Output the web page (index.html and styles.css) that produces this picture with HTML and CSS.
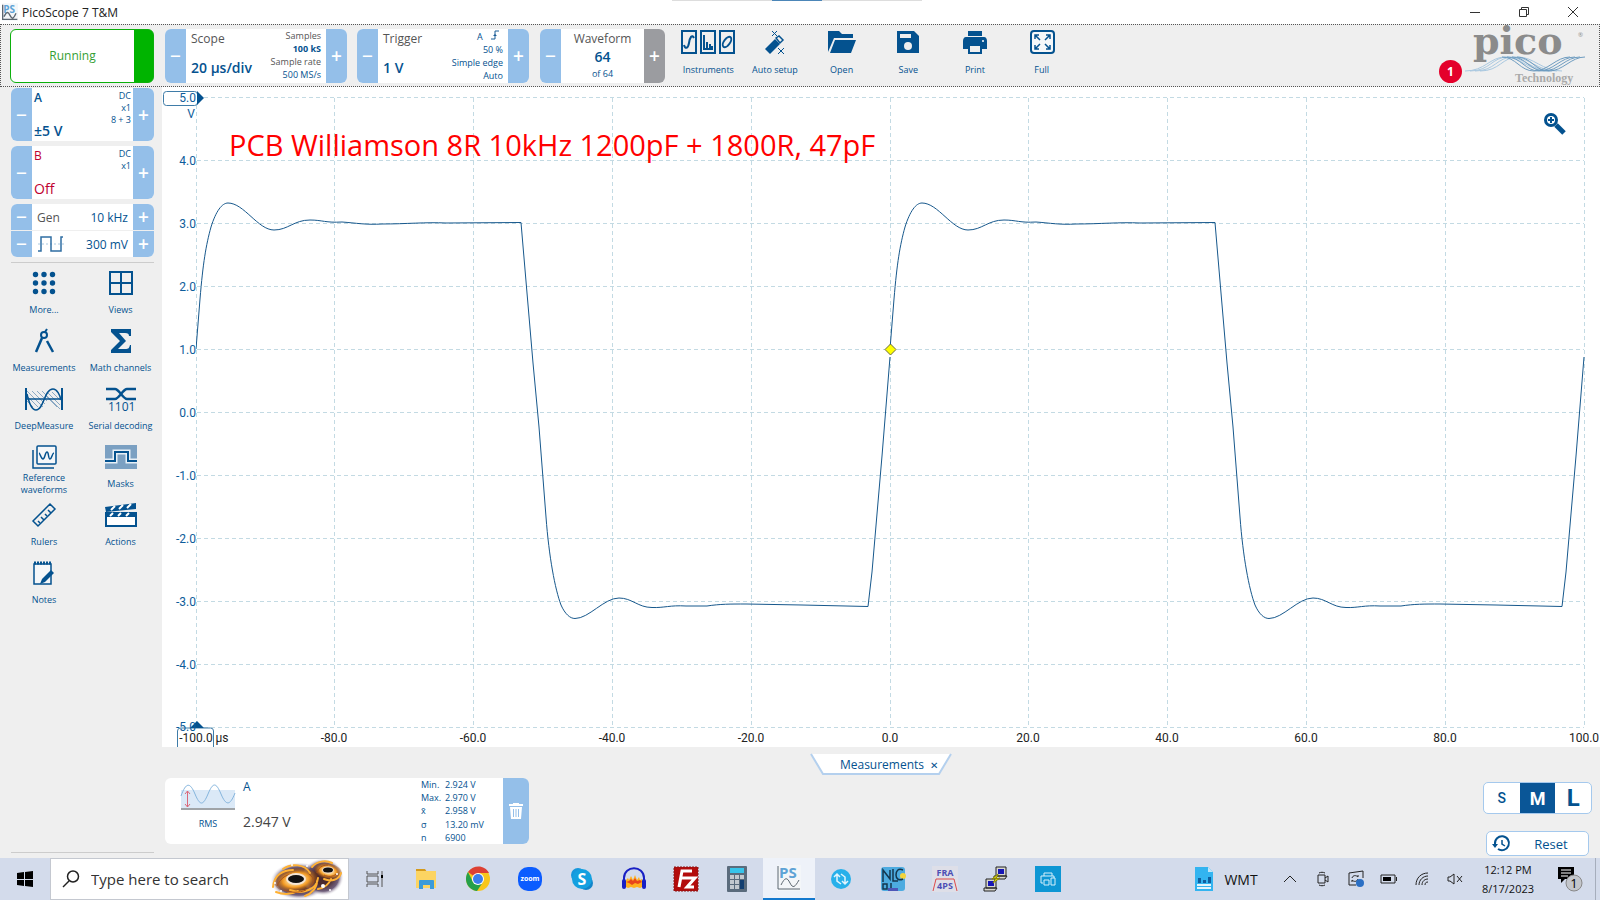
FILE: index.html
```
<!DOCTYPE html>
<html lang="en">
<head>
    <meta charset="UTF-8">
    <meta name="viewport" content="width=device-width, initial-scale=1.0">
    <title>PicoScope 7 T&amp;M</title>
    <link rel="stylesheet" href="styles.css">
</head>
<body>
    <header class="titlebar">
        <svg class="app-icon" width="16" height="18" viewBox="0 0 24 26"><rect width="24" height="26" fill="#f3f6f9"/><text x="2" y="14" class="ps-letters">PS</text><path d="M1 2v22h22M3 20c4-8 6-8 9-2s5 6 9-3" fill="none" stroke="#5b6670" stroke-width="2"/></svg>
        <span class="app-name">PicoScope 7 T&amp;M</span>
        <div class="snap-bar"></div>
        <div class="window-buttons">
            <button aria-label="Minimize"><svg width="12" height="12" viewBox="0 0 12 12"><path d="M1 6.500h10"/></svg></button>
            <button aria-label="Restore"><svg width="12" height="12" viewBox="0 0 12 12"><path d="M1.500 3.500h7v7h-7zM3.500 3.500v-2h7v7h-2"/></svg></button>
            <button aria-label="Close"><svg width="12" height="12" viewBox="0 0 12 12"><path d="M1 1l10 10M11 1L1 11"/></svg></button>
        </div>
    </header>

    <div class="toolbar">
        <button class="run-btn"><span>Running</span></button>

        <section class="control scope">
            <button class="step" aria-label="Decrease timebase">&minus;</button>
            <div class="control-body">
                <div class="control-main"><span class="name">Scope</span><strong class="value">20 µs/div</strong></div>
                <div class="control-info"><span class="grey">Samples</span><b>100 kS</b><span class="grey">Sample rate</span><span>500 MS/s</span></div>
            </div>
            <button class="step" aria-label="Increase timebase">+</button>
        </section>

        <section class="control trigger">
            <button class="step" aria-label="Decrease trigger level">&minus;</button>
            <div class="control-body">
                <div class="control-main"><span class="name">Trigger</span><strong class="value">1 V</strong></div>
                <div class="control-info"><span>A <svg class="edge" width="8" height="10" viewBox="0 0 8 10"><path d="M0 9h4V1h4" fill="none" stroke="#1a5c96"/><path d="M2 6l2-2 2 2z" fill="#1a5c96"/></svg></span><span>50 %</span><span>Simple edge</span><span>Auto</span></div>
            </div>
            <button class="step" aria-label="Increase trigger level">+</button>
        </section>

        <section class="control waveform">
            <button class="step" aria-label="Previous waveform">&minus;</button>
            <div class="control-body centered"><span class="name">Waveform</span><strong class="value">64</strong><span class="small">of 64</span></div>
            <button class="step disabled" aria-label="Next waveform">+</button>
        </section>

        <nav class="tool-buttons">
            <button><svg width="56" height="24" viewBox="0 0 56 24"><g fill="none" stroke="#04528f" stroke-width="2"><path d="M2 1h14v22H2zM21 1h14v22H21zM40 1h14v22H40z"/><path d="M4 15c1 4 4 4 5-2s3-9 5-5M24 5v14h9M27 19v-7M30 19v-5M32 19v-3"/><ellipse cx="47" cy="12" rx="3" ry="6" transform="rotate(35 47 12)"/></g></svg>Instruments</button>
            <button><svg width="24" height="24" viewBox="0 0 24 24"><path d="M2 19L12 9l5 5L7 24z" fill="#04528f"/><path d="M13 8l3-2 4 4-3 3z" fill="none" stroke="#04528f" stroke-width="1.500"/><path d="M9 1l5 5M14 1L9 6M15 18l6 6M21 18l-6 6" stroke="#04528f"/></svg>Auto setup</button>
            <button><svg width="28" height="24" viewBox="0 0 28 24"><path d="M0 22V1h11l3 3h11v4H6L0 22zM7 10h21l-5 13H2z" fill="#04528f"/></svg>Open</button>
            <button><svg width="24" height="24" viewBox="0 0 24 24"><path d="M1 1h17l5 5v17H1z" fill="#04528f"/><path d="M4 4h11v4H4z" fill="#efefef"/><circle cx="12" cy="16" r="4" fill="#efefef"/></svg>Save</button>
            <button><svg width="26" height="24" viewBox="0 0 26 24"><path d="M6 1h14v5H6zM4 7h18c2 0 3 2 3 4v8h-5v-4H6v4H1v-8c0-2 1-4 3-4z" fill="#04528f"/><path d="M7 15h12v8H7z" fill="#efefef" stroke="#04528f" stroke-width="2"/><circle cx="21" cy="11" r="1" fill="#fff"/></svg>Print</button>
            <button><svg width="26" height="24" viewBox="0 0 26 24"><rect x="2" y="1" width="23" height="22" rx="3" fill="#f5f7f9" stroke="#04528f" stroke-width="2"/><path d="M11 10L6 5M6 9V5h4M16 10l5-5M21 9V5h-4M11 14l-5 5M6 15v4h4M16 14l5 5M21 15v4h-4" fill="none" stroke="#04528f" stroke-width="1.500"/></svg>Full</button>
        </nav>

        <div class="brand">
            <span class="alert-count">1</span>
            <svg width="124" height="58" viewBox="0 0 124 58">
                <text x="8" y="27" class="logo-name">pico</text>
                <text x="113" y="10" class="logo-reg">®</text>
                <g fill="none" stroke-width="1">
                    <path d="M0 44c20 0 25-14 40-14s24 14 44 14M5 44c20 0 22-14 38-14s24 14 44 14M10 44c20 0 22-14 38-14s24 14 44 14M15 44c20 0 22-14 38-14s24 14 44 14" stroke="#a9c8e0"/>
                    <path d="M37 30c14 0 18 14 32 14s22-14 36-14M42 30c14 0 18 14 32 14s22-14 36-14M47 30c14 0 18 14 32 14s22-14 36-14M52 30c14 0 18 14 32 14s22-14 36-14" stroke="#6e9cc0"/>
                </g>
                <text x="50" y="55" class="logo-sub">Technology</text>
            </svg>
        </div>
    </div>

    <main class="workspace">
        <aside class="sidebar">
            <section class="control channel">
                <button class="step" aria-label="Decrease range of A">&minus;</button>
                <div class="control-body">
                    <div class="control-main"><span class="letter">A</span><span class="range">±5 V</span></div>
                    <div class="control-info"><span>DC</span><span>x1</span><span>8 + 3</span></div>
                </div>
                <button class="step" aria-label="Increase range of A">+</button>
            </section>
            <section class="control channel channel-b">
                <button class="step" aria-label="Decrease range of B">&minus;</button>
                <div class="control-body">
                    <div class="control-main"><span class="letter">B</span><span class="range">Off</span></div>
                    <div class="control-info"><span>DC</span><span>x1</span></div>
                </div>
                <button class="step" aria-label="Increase range of B">+</button>
            </section>
            <section class="generator">
                <div class="gen-row"><button class="step" aria-label="Decrease frequency">&minus;</button><div><span class="grey">Gen</span><span>10 kHz</span></div><button class="step" aria-label="Increase frequency">+</button></div>
                <div class="gen-row"><button class="step" aria-label="Decrease amplitude">&minus;</button><div><svg width="28" height="18" viewBox="0 0 28 18"><path d="M1 9h26" stroke="#a9c8e0" stroke-dasharray="2 2"/><path d="M1 16h3V2h10v14h10V2h2" fill="none" stroke="#2f6ea3" stroke-width="1.500"/></svg><span>300 mV</span></div><button class="step" aria-label="Increase amplitude">+</button></div>
            </section>

            <nav class="tool-grid">
                <button><svg width="24" height="24" viewBox="0 0 24 24" fill="#04528f"><circle cx="3.500" cy="3.500" r="2.700"/><circle cx="12" cy="3.500" r="2.700"/><circle cx="20.500" cy="3.500" r="2.700"/><circle cx="3.500" cy="12" r="2.700"/><circle cx="12" cy="12" r="2.700"/><circle cx="20.500" cy="12" r="2.700"/><circle cx="3.500" cy="20.500" r="2.700"/><circle cx="12" cy="20.500" r="2.700"/><circle cx="20.500" cy="20.500" r="2.700"/></svg><span>More...</span></button>
                <button><svg width="24" height="24" viewBox="0 0 24 24"><path d="M1 1h22v22H1zM12 1v22M1 12h22" fill="none" stroke="#04528f" stroke-width="2"/></svg><span>Views</span></button>
                <button><svg width="24" height="24" viewBox="0 0 24 24"><g fill="none" stroke="#04528f" stroke-width="2"><circle cx="12" cy="6" r="3"/><path d="M13 3l2-3" /><path d="M10 9L4 23M15 12l6 11" stroke-width="2.500"/></g></svg><span>Measurements</span></button>
                <button><svg width="24" height="24" viewBox="0 0 24 24"><path d="M2 0h20v7h-2c0-2-1-3-4-3h-6l7 8-8 8h7c4 0 4-1 5-4h1v8H2v-3l9-9-9-9z" fill="#04528f"/></svg><span>Math channels</span></button>
                <button><svg width="38" height="24" viewBox="0 0 38 24"><path d="M2 4l16 16M7 4l13 13M12 4l10 10M2 9l11 11M2 14l6 6M20 8l12 12M23 6l12 12M17 4l18 18M27 5l8 8" stroke="#8ba9c4"/><g fill="none" stroke="#04528f"><path d="M1 1v22M37 1v22" stroke-width="2"/><path d="M1 12h36M2 7C4 16 7 23 11 23C19 23 19 2 28 2C32 2 35 8 36 13" stroke-width="1.500"/></g></svg><span>DeepMeasure</span></button>
                <button><svg width="32" height="24" viewBox="0 0 32 24"><path d="M1 2h9c4 0 8 10 12 10h9M1 12h9c4 0 8-10 12-10h9" fill="none" stroke="#04528f" stroke-width="2.500"/><text x="3" y="24" class="bits">1101</text></svg><span>Serial decoding</span></button>
                <button><svg width="26" height="24" viewBox="0 0 26 24"><g fill="none" stroke="#04528f" stroke-width="1.500"><rect x="6" y="1" width="19" height="18" rx="1" fill="#f5f7f9"/><path d="M2 5v18h21"/><path d="M8 8c1 0 2 6 4 6s2-7 4-7 1 7 3 7 2-6 4-6"/></g></svg><span>Reference waveforms</span></button>
                <button><svg width="32" height="24" viewBox="0 0 32 24"><path d="M0 0h32v24H0z" fill="#7ba0c2"/><path d="M0 16h10V7h13v9h9" fill="none" stroke="#e8f0f7" stroke-width="5"/><path d="M0 16h10V7h13v9h9" fill="none" stroke="#04528f" stroke-width="2"/></svg><span>Masks</span></button>
                <button><svg width="24" height="24" viewBox="0 0 24 24"><g fill="none" stroke="#04528f" stroke-width="1.500"><path d="M1 18L18 1l5 5L6 23z"/><path d="M8 20l-2-2M12 17l-3-3M15 13l-2-2M19 10l-3-3"/></g></svg><span>Rulers</span></button>
                <button><svg width="32" height="24" viewBox="0 0 32 24"><path d="M1 13h30v10H1z" fill="#fff" stroke="#04528f" stroke-width="2"/><path d="M0 4L31 0v6L1 9zM0 9h32v5H0z" fill="#04528f"/><path d="M6 7l4-4M14 6l4-4M22 5l4-4M5 13l3-3M13 13l3-3M21 13l3-3" stroke="#fff" stroke-width="2"/></svg><span>Actions</span></button>
                <button><svg width="24" height="24" viewBox="0 0 24 24"><path d="M2 3h17v20H2z" fill="#f5f7f9" stroke="#04528f" stroke-width="1.500"/><path d="M2 2h18" stroke="#04528f" stroke-width="3" stroke-dasharray="2 1"/><path d="M8 23l2-5 9-9 3 3-9 9z" fill="#04528f"/></svg><span>Notes</span></button>
            </nav>
        </aside>

        <section class="view">
            <svg class="plot" viewBox="0 0 1438 660">
                <path class="grid" d="M35 10.500H1422M35 73.500H1422M35 136.500H1422M35 199.500H1422M35 262.500H1422M35 325.500H1422M35 388.500H1422M35 451.500H1422M35 514.500H1422M35 577.500H1422M35 640.500H1422"/>
                <path class="grid" d="M34.500 11V640M172.500 11V640M311.500 11V640M450.500 11V640M589.500 11V640M728.500 11V640M866.500 11V640M1005.500 11V640M1144.500 11V640M1283.500 11V640M1422.500 11V640"/>

                <!-- top and bottom axis handles -->
                <g class="handle">
                    <rect x="1.500" y="4.500" width="34" height="14" rx="3"/>
                    <path d="M35 4l7 7-7 7z" class="arrow"/>
                    <path d="M15.500 660V644q0-3 3-3h30q3 0 3 3v16"/>
                    <path d="M28 641l7-7 7 7z" class="arrow"/>
                </g>

                <g class="y-labels">
                    <text x="34" y="15">5.0</text>
                    <text x="33" y="31">V</text>
                    <text x="34" y="78">4.0</text>
                    <text x="34" y="141">3.0</text>
                    <text x="34" y="204">2.0</text>
                    <text x="34" y="267">1.0</text>
                    <text x="34" y="330">0.0</text>
                    <text x="34" y="393">-1.0</text>
                    <text x="34" y="456">-2.0</text>
                    <text x="34" y="519">-3.0</text>
                    <text x="34" y="582">-4.0</text>
                    <text x="34" y="644">-5.0</text>
                </g>
                <g class="x-labels">
                    <text x="34" y="655">-100.0</text>
                    <text x="60" y="655">µs</text>
                    <text x="172" y="655">-80.0</text>
                    <text x="311" y="655">-60.0</text>
                    <text x="450" y="655">-40.0</text>
                    <text x="589" y="655">-20.0</text>
                    <text x="728" y="655">0.0</text>
                    <text x="866" y="655">20.0</text>
                    <text x="1005" y="655">40.0</text>
                    <text x="1144" y="655">60.0</text>
                    <text x="1283" y="655">80.0</text>
                    <text x="1422" y="655">100.0</text>
                </g>

                <!-- one 100 µs period, starting at the trigger point -->
                <defs>
                    <path id="period" d="M0 262L4 212C7 176 10 158 15 140C20 124 26 116 32 116C48 116 62 143 78 143C92 143 98 133 114 133C126 133 130 136 146 135C160 136 170 138 186 137C210 137 230 135 250 136L325 135.500L331 206L337 276L343 340L350 430C353 470 359 502 365 518C369 527 374 531.500 379 531.500C393 531.500 408 511 423 511C436 511 442 520.500 456 520.500C468 521 474 518 490 519L511 519C524 517 534 517 550 517L606 518L672 519.500L676 485L686 369L694 270"/>
                    <clipPath id="area"><path d="M34 0H1423V660H34z"/></clipPath>
                </defs>
                <g class="trace" clip-path="url(#area)">
                    <use href="#period" x="34"/>
                    <use href="#period" x="728"/>
                </g>
                <path d="M728.500 257l5.500 5.500-5.500 5.500-5.500-5.500z" fill="#ff0" stroke="#6b6b3a"/>
                <text x="67" y="69" class="annotation">PCB Williamson 8R 10kHz 1200pF + 1800R, 47pF</text>

                <g fill="none" stroke="#04528f">
                    <circle cx="1389" cy="33" r="5.500" stroke-width="3"/>
                    <path d="M1386 33h6M1389 30v6" stroke-width="2"/>
                    <path d="M1394 38l8 8" stroke-width="5"/>
                </g>
            </svg>

            <div class="panel">
                <div class="tab">
                    <svg width="140" height="22" viewBox="0 0 140 22"><path d="M0 0l12 20h116L140 0" fill="#fff" stroke="#b4d0ee" stroke-width="2"/></svg>
                    <span>Measurements</span><button aria-label="Close measurements">✕</button>
                </div>
                <div class="panel-row">
                    <article class="measure">
                        <div class="measure-type">
                            <svg width="54" height="26" viewBox="0 0 54 26"><path d="M0 5h54v18H0z" fill="#dbe9f7"/><path d="M0 11C5-3 9-3 14 9S22 21 27 9S35-3 40 9S49 21 54 8" fill="none" stroke="#84b4dc"/><path d="M0 24h54" stroke="#a0a4a8" stroke-width="2"/><path d="M6.500 6v16M4 9l2.500-3L9 9M4 19l2.500 3L9 19" fill="none" stroke="#d9687a"/></svg>
                            RMS
                        </div>
                        <div class="measure-value"><span class="channel-name">A</span><span class="reading">2.947 V</span></div>
                        <table class="stats">
                            <tr><th>Min.</th><td>2.924 V</td></tr>
                            <tr><th>Max.</th><td>2.970 V</td></tr>
                            <tr><th>x̄</th><td>2.958 V</td></tr>
                            <tr><th>σ</th><td>13.20 mV</td></tr>
                            <tr><th>n</th><td>6900</td></tr>
                        </table>
                        <button class="delete" aria-label="Delete measurement"><svg width="14" height="18" viewBox="0 0 14 18"><path d="M4 2V1h6v1h4v2H0V2zM1 5h12l-1 12H2z" fill="#fff"/><path d="M4.500 7v8M7 7v8M9.500 7v8" stroke="#94bfe9"/></svg></button>
                    </article>
                    <div class="panel-side">
                        <div class="sizes"><button class="s">S</button><button class="m" aria-pressed="true">M</button><button class="l">L</button></div>
                        <button class="reset"><svg width="18" height="16" viewBox="0 0 18 16"><g fill="none" stroke="#04528f" stroke-width="2"><path d="M3 8a7 7 0 1 1 3 5"/><path d="M10 4v4l3 2" stroke-width="1.500"/></g><path d="M0 8h6l-3 4z" fill="#04528f"/></svg><span>Reset</span></button>
                    </div>
                </div>
            </div>
        </section>
    </main>

    <footer class="taskbar">
        <button class="start" aria-label="Start"><svg width="18" height="18" viewBox="0 0 18 18"><path d="M1 3l7-1v7H1zM9 2l8-1v8H9zM1 10h7v6l-7-1zM9 10h8v7l-8-1z"/></svg></button>
        <label class="search">
            <svg width="18" height="18" viewBox="0 0 18 18"><circle cx="11" cy="6.500" r="5.500" fill="none" stroke="#222" stroke-width="1.500"/><path d="M7 11l-6 6" stroke="#222" stroke-width="1.500"/></svg>
            <input type="text" placeholder="Type here to search" aria-label="Search">
            <svg width="74" height="40" viewBox="0 0 74 40">
                <defs>
                    <radialGradient id="glow"><stop offset="0.400" stop-color="#4a2a2e"/><stop offset="0.750" stop-color="#5f4c6c" stop-opacity="0.900"/><stop offset="1" stop-color="#fff" stop-opacity="0"/></radialGradient>
                    <radialGradient id="disk"><stop offset="0.300" stop-color="#ffe0a0"/><stop offset="0.600" stop-color="#f29a24"/><stop offset="1" stop-color="#8a4210" stop-opacity="0.300"/></radialGradient>
                </defs>
                <ellipse cx="29" cy="22" rx="29" ry="19" fill="url(#glow)"/><ellipse cx="53" cy="18" rx="21" ry="19" fill="url(#glow)"/>
                <ellipse cx="26" cy="21" rx="22" ry="12" fill="url(#disk)" transform="rotate(-8 26 21)"/>
                <ellipse cx="58" cy="12" rx="14" ry="8" fill="url(#disk)" transform="rotate(12 58 12)"/>
                <g fill="none" stroke="#ffb133" stroke-width="2" stroke-linecap="round"><path d="M3 28c1-12 10-17 20-17M13 10c8-6 22-5 27 4M48 19c-1 11-15 17-28 12M35 37c6-2 12-8 12-15M6 33c8 3 16 2 22-1M42 8c5-6 14-7 20-4M71 14c-2 7-10 9-17 6M48 30c6-1 11-5 13-10"/></g>
                <g fill="none" stroke="#a8521a" stroke-width="1"><path d="M7 27c3-7 8-11 15-12M39 15c6 4 6 10-1 14M14 31c7 3 15 3 22 0M47 14c1-5 5-8 11-8M66 15c-3 3-8 3-12 1"/></g>
                <ellipse cx="26" cy="20" rx="10" ry="6" fill="#f4e6d6"/><ellipse cx="26" cy="20" rx="8" ry="4" fill="#111"/>
                <ellipse cx="58" cy="11" rx="6" ry="3.500" fill="#e9d4c2"/><ellipse cx="58" cy="11" rx="5" ry="2.500" fill="#111"/>
                <g fill="#fff"><circle cx="22" cy="6" r="1"/><circle cx="53" cy="27" r="2"/><circle cx="37" cy="7" r="1"/><circle cx="67" cy="15" r="1"/><circle cx="11" cy="32" r="1"/><circle cx="60" cy="31" r="1"/><circle cx="5" cy="24" r="1"/></g>
            </svg>
        </label>
        <nav class="apps">
            <button aria-label="Task view"><svg width="18" height="18" viewBox="0 0 18 18"><path d="M1 1v3h11V1M1 17v-3h11v3M1 6h11v6H1zM16 1v16" fill="none" stroke="#555"/><path d="M15 5h2v3h-2z"/></svg></button>
            <button aria-label="File Explorer"><svg width="24" height="24" viewBox="0 0 24 24"><path d="M1 2h9l2 3H1z" fill="#d59a1b"/><path d="M1 4h20v17H1z" fill="#fcd462"/><path d="M4 22v-8q0-1 1-1h13q1 0 1 1v8h-4v-4H8v4z" fill="#3c9bd9"/></svg></button>
            <button aria-label="Chrome"><svg width="26" height="26" viewBox="0 0 26 26"><circle cx="13" cy="13" r="12" fill="#f8c61c"/><path d="M13 13L3 6C9-2 20-1 24 7H13z" fill="#dd4034"/><path d="M3 6C-2 14 3 24 12 25l6-9-5 2-5-2z" fill="#25a04b"/><circle cx="13" cy="13" r="6" fill="#fff"/><circle cx="13" cy="13" r="5" fill="#3b7ded"/></svg></button>
            <button aria-label="Zoom"><svg width="26" height="26" viewBox="0 0 26 26"><rect x="1" y="1" width="24" height="24" rx="10" fill="#0b5cff"/><text x="13" y="15" class="zoom-text">zoom</text></svg></button>
            <button aria-label="Skype"><svg width="24" height="24" viewBox="0 0 24 24"><circle cx="8" cy="8" r="7" fill="#1597dc"/><circle cx="16" cy="16" r="7" fill="#1284c9"/><circle cx="12" cy="12" r="10" fill="#14a0e0"/><text x="12" y="18" class="skype-text">S</text></svg></button>
            <button aria-label="Audacity"><svg width="26" height="24" viewBox="0 0 26 24"><path d="M5 13l2-2 1 2 2-4 2 4 2-5 2 5 2-3 1 3 2-1v8l-2 1-3-1-3 1-3-1-3 1-2-1z" fill="#ffb01f"/><path d="M5 15l3-1 2-2 2 2 2-3 2 3 3-1 2 2-4 2-3-1-3 2-3-2z" fill="#e8451b"/><path d="M3 15V11C3-2 23-2 23 11v4" fill="none" stroke="#1820c4" stroke-width="2"/><rect x="1" y="12" width="4" height="10" rx="2" fill="#1820c4"/><rect x="21" y="12" width="4" height="10" rx="2" fill="#1820c4"/></svg></button>
            <button aria-label="FileZilla"><svg width="26" height="26" viewBox="0 0 26 26"><path d="M1 1h24v24H1z" fill="#b30b0b" stroke="#8b1616" stroke-dasharray="2 1"/><path d="M6 21L9 5h10M7 12h7M14 12h8l-8 9h7" fill="none" stroke="#fff" stroke-width="3"/></svg></button>
            <button aria-label="Calculator"><svg width="20" height="26" viewBox="0 0 20 26"><rect width="20" height="26" rx="1" fill="#5a6b7c"/><path d="M3 2h14v5H3z" fill="#37c4ea"/><path d="M3 9h4v4H3zM8 9h4v4H8zM13 9h4v4h-4zM3 14h4v4H3zM8 14h4v4H8zM3 19h4v4H3zM8 19h4v4H8z" fill="#c3c9cf"/><path d="M13 14h4v9h-4z" fill="#123e70"/></svg></button>
            <button class="active" aria-label="PicoScope"><svg width="24" height="26" viewBox="0 0 24 26"><rect width="24" height="26" fill="#f3f6f9"/><text x="2" y="13" class="ps-letters">PS</text><path d="M1 1v23h22M4 20c4-8 6-8 9-2s5 4 9-3" fill="none" stroke="#5b6670"/></svg></button>
            <button aria-label="Sync"><svg width="22" height="24" viewBox="0 0 22 24"><circle cx="11" cy="12" r="10" fill="#27b0ea"/><path d="M4 10l3-3 3 3M7 8v6l4 3M18 14l-3 3-3-3M15 16v-6l-4-3" fill="none" stroke="#e2f5fd" stroke-width="1.500"/></svg></button>
            <button aria-label="NLC"><svg width="26" height="26" viewBox="0 0 26 26"><rect x="1" y="1" width="24" height="24" rx="3" fill="#4dabe0"/><circle cx="23" cy="10" r="3" fill="#f3d43c"/><path d="M3 16V4l7 9V4M13 3v12h5M23 4c-5-2-7 1-7 5s3 6 7 4M3 18h4v5H3zM11 17v6" fill="none" stroke="#14374f" stroke-width="1.500"/><path d="M8 22h10v3H8z" fill="#4d56b8"/></svg></button>
            <button aria-label="FRA4PS"><svg width="26" height="26" viewBox="0 0 26 26"><path d="M0 0h26v26H0z" fill="#dedfe8"/><text x="13" y="10" class="fra-text">FRA</text><text x="13" y="23" class="fra-text">4PS</text><path d="M1 25l3-12h18l3 12" fill="none" stroke="#dd4a4a"/></svg></button>
            <button aria-label="PuTTY"><svg width="26" height="26" viewBox="0 0 26 26"><g fill="#d7d7cf" stroke="#222"><path d="M13 1h10v9H13zM3 13h10v9H3zM11 10h13l-2 3H11zM1 22h13l-2 3H1z"/></g><path d="M15 3h6v5h-6zM5 15h6v5H5z" fill="#1717b5"/><path d="M15 8l-6 5 4-1-3 5 7-5-4 1z" fill="#f7f01c" stroke="#8b8600"/></svg></button>
            <button aria-label="Printer"><svg width="26" height="26" viewBox="0 0 26 26"><path d="M0 0h26v26H0z" fill="#0d96d4"/><path d="M9 10V7h8v3M8 17H6v-7h13v2M9 14h5v5H9zM16 12h4v7h-4z" fill="none" stroke="#d7f0fb"/></svg></button>
        </nav>
        <div class="tray">
            <button class="wmt"><svg width="20" height="26" viewBox="0 0 20 26"><path d="M1 1h13l5 5v19H1z" fill="#33b4f0"/><path d="M14 1v5h5z" fill="#bfe6fa"/><path d="M4 12h3v5H4zM9 14h3v3H9zM14 11h3v6h-3z" fill="#105e9e"/><path d="M3 19h14M3 22h14" stroke="#e3f5fd" stroke-width="2"/></svg>WMT</button>
            <button class="line" aria-label="Show hidden icons"><svg width="14" height="8" viewBox="0 0 14 8"><path d="M1 7l6-6 6 6"/></svg></button>
            <button class="line" aria-label="Meet now"><svg width="14" height="16" viewBox="0 0 14 16"><path d="M2 4h7v8H2zM9 7l3-2v6l-3-2M3 2c2-1 4-1 6 0M3 14c2 1 4 1 6 0"/></svg></button>
            <button class="line" aria-label="Updates"><svg width="18" height="18" viewBox="0 0 18 18"><path d="M9 15H2V3l14-2v7M5 8c1-3 4-3 6-1V5M11 9c-1 3-4 3-6 1v2"/><circle cx="13" cy="13" r="4" fill="#2a6fc4"/></svg></button>
            <button class="line" aria-label="Battery"><svg width="18" height="10" viewBox="0 0 18 10"><path d="M1 1h14v8H1zM16.500 3v4"/><rect x="3" y="3" width="8" height="4"/></svg></button>
            <button class="line" aria-label="Network"><svg width="14" height="14" viewBox="0 0 14 14"><path d="M1 13C1 6 6 1 13 1M4 13c0-5 4-9 9-9M7 13c0-4 3-6 6-6M10 13c0-2 1-3 3-3"/></svg></button>
            <button class="line" aria-label="Volume muted"><svg width="16" height="12" viewBox="0 0 16 12"><path d="M1 4h2l4-3v10L3 8H1zM10 3l5 6M15 3l-5 6"/></svg></button>
            <button class="clock"><span>12:12 PM</span><span>8/17/2023</span></button>
            <button class="notices" aria-label="Notifications"><svg width="26" height="26" viewBox="0 0 26 26"><path d="M1 1h16v12h-9l-4 4v-4H1z" fill="#000"/><path d="M4 4h10M4 7h10M4 10h7" stroke="#fff"/><circle cx="17" cy="17" r="8" fill="#c3c6cb" stroke="#888"/><text x="17" y="22" class="notice-count">1</text></svg></button>
        </div>
    </footer>
</body>
</html>
```
FILE: styles.css
```
:root {
    --blue: #04528f;
    --step: #94bfe9;
    --panel: #efefef;
    --green: #0cb00c;
    --red: #c00030;
}

* {
    margin: 0;
    padding: 0;
    box-sizing: border-box;
}

body {
    min-height: 100vh;
    display: flex;
    flex-direction: column;
    background: var(--panel);
    color: var(--blue);
    font-family: 'Open Sans', 'Noto Sans', sans-serif;
    font-size: 12px;
}

button {
    border: none;
    background: none;
    color: inherit;
    font-family: inherit;
    cursor: pointer;
}

svg {
    display: block;
    flex-shrink: 0;
    overflow: visible;
}

/* Title bar */
.titlebar {
    position: relative;
    display: flex;
    align-items: center;
    height: 24px;
    padding-left: 2px;
    background: #fff;
    color: #222;
}

.app-name {
    flex: 1;
    padding-left: 4px;
}

.ps-letters {
    font: 700 15px 'Open Sans', sans-serif;
    fill: #5ea3d6;
}

.snap-bar {
    position: absolute;
    top: 0;
    left: 42%;
    width: 250px;
    height: 1px;
    background: linear-gradient(to right, #ddd 40%, #4c86b8 40%, #4c86b8 60%, #ddd 60%);
}

.window-buttons {
    display: flex;
    margin-right: 3px;
}

.window-buttons button {
    width: 49px;
    display: flex;
    justify-content: center;
}

.window-buttons path {
    fill: none;
    stroke: #333;
}

/* Toolbar */
.toolbar {
    display: flex;
    align-items: center;
    height: 63px;
    padding-left: 9px;
    border: 1px dotted #555;
}

.run-btn {
    width: 144px;
    height: 54px;
    margin-right: 11px;
    padding-right: 19px;
    border: 1px solid var(--green);
    border-radius: 6px;
    background: linear-gradient(to left, #00b400 19px, #fff 19px);
    color: #35a035;
    font-size: 12px;
}

.control {
    display: flex;
    height: 54px;
    border-radius: 6px;
    overflow: hidden;
    background: #fff;
}

.step {
    width: 21px;
    flex-shrink: 0;
    background: var(--step);
    color: #fff;
    font-size: 19px;
    font-weight: 600;
    line-height: 20px;
}

.step.disabled {
    background: #9b9ca0;
}

.scope {
    width: 182px;
    margin-right: 10px;
}

.trigger {
    width: 172px;
    margin-right: 11px;
}

.waveform {
    width: 125px;
    margin-right: 10px;
}

.control-body {
    flex: 1;
    display: flex;
    justify-content: space-between;
    padding: 0 5px;
}

.control-main {
    display: flex;
    flex-direction: column;
    justify-content: space-between;
    white-space: nowrap;
    line-height: 20px;
    padding-bottom: 5px;
}

.control-info {
    display: flex;
    flex-direction: column;
    justify-content: space-evenly;
    align-items: flex-end;
    white-space: nowrap;
    font-size: 9px;
    line-height: 12px;
}

.name,
.grey {
    color: #555;
}

.value {
    font-size: 14px;
    font-weight: 600;
}

.edge {
    display: inline-block;
    margin: 0 4px 0 6px;
}

.centered {
    flex-direction: column;
    justify-content: center;
    align-items: center;
    line-height: 18px;
}

.centered .small {
    font-size: 9px;
    line-height: 16px;
}

.tool-buttons {
    display: grid;
    grid-template-columns: repeat(6, 1fr);
    width: 400px;
    margin-right: auto;
}

.tool-buttons button {
    display: flex;
    flex-direction: column;
    align-items: center;
    gap: 10px;
    font-size: 9px;
    line-height: 12px;
    padding-bottom: 6px;
}

.brand {
    display: flex;
    align-items: flex-end;
    gap: 3px;
    margin-right: 10px;
}

.alert-count {
    width: 23px;
    height: 23px;
    margin-bottom: 2px;
    border-radius: 50%;
    background: #e4002b;
    color: #fff;
    font-weight: 700;
    line-height: 23px;
    text-align: center;
}

.logo-name {
    font: 700 38px 'DejaVu Serif', serif;
    fill: #8b8b8b;
}

.logo-reg {
    font: 6px 'Open Sans', sans-serif;
    fill: #8b8b8b;
}

.logo-sub {
    font: 700 12px 'Liberation Serif', serif;
    fill: #aaa;
}

/* Sidebar */
.workspace {
    flex: 1;
    display: flex;
    background: var(--panel);
}

.sidebar {
    width: 162px;
    flex-shrink: 0;
    display: flex;
    flex-direction: column;
    gap: 5px;
    padding: 1px 8px 5px 11px;
}

.channel {
    height: 53px;
    width: 143px;
}

.channel .control-body {
    padding: 0 2px;
}

.channel .control-main {
    padding-bottom: 0;
}

.channel .control-info {
    justify-content: flex-start;
    padding-top: 2px;
}

.letter {
    font-size: 12px;
    font-weight: 600;
}

.range {
    font-size: 14px;
    font-weight: 600;
}

.channel-b .control-main {
    color: var(--red);
}

.channel-b .letter,
.channel-b .range {
    font-weight: 400;
}

.generator {
    width: 143px;
    display: flex;
    flex-direction: column;
    gap: 1px;
    border-radius: 6px;
    overflow: hidden;
}

.gen-row {
    display: flex;
    height: 26px;
    background: #fff;
}

.gen-row div {
    flex: 1;
    display: flex;
    align-items: center;
    justify-content: space-between;
    padding: 0 5px;
}

.tool-grid {
    flex: 1;
    display: grid;
    grid-template-columns: 66px 1fr;
    grid-auto-rows: 58px;
    column-gap: 10px;
    border-top: 1px solid #ccc;
    border-bottom: 1px solid #ccc;
    padding-top: 5px;
}

.tool-grid button {
    display: flex;
    flex-direction: column;
    align-items: center;
    justify-content: flex-start;
    gap: 3px;
    padding-top: 3px;
    font-size: 9px;
    line-height: 12px;
    white-space: nowrap;
}

.tool-grid span {
    display: flex;
    align-items: center;
    height: 24px;
    white-space: normal;
}

.bits {
    font: 12px 'Open Sans', sans-serif;
    fill: var(--blue);
}

/* Plot */
.view {
    flex: 1;
    display: flex;
    flex-direction: column;
    min-width: 0;
}

.plot {
    width: 100%;
    background: #fff;
}

.grid {
    fill: none;
    stroke: #c3dae3;
    stroke-dasharray: 4 3;
}

.handle {
    fill: #fff;
    stroke: #3f7ca8;
}

.handle .arrow {
    fill: var(--blue);
    stroke: none;
}

.y-labels {
    font: 12px Roboto, sans-serif;
    fill: #0d5c9a;
    text-anchor: end;
}

.x-labels {
    font: 12px Roboto, sans-serif;
    fill: #222;
    text-anchor: middle;
}

.trace {
    fill: none;
    stroke: #17588c;
}

.annotation {
    font: 29px 'Open Sans', sans-serif;
    fill: #ff0000;
}

/* Measurements panel */
.panel {
    flex: 1;
    display: flex;
    flex-direction: column;
    align-items: center;
    padding-top: 7px;
}

.tab {
    position: relative;
    display: flex;
    align-items: center;
    justify-content: center;
    gap: 6px;
    width: 140px;
    height: 22px;
    padding-left: 16px;
}

.tab svg {
    position: absolute;
    inset: 0;
}

.tab span,
.tab button {
    position: relative;
    line-height: 20px;
}

.tab button {
    font-size: 10px;
}

.panel-row {
    width: 100%;
    display: flex;
    justify-content: space-between;
    align-items: flex-start;
    padding: 2px 8px 0 3px;
}

.measure {
    display: flex;
    width: 364px;
    height: 66px;
    border-radius: 6px;
    overflow: hidden;
    background: #fff;
}

.measure-type {
    width: 70px;
    display: flex;
    flex-direction: column;
    align-items: center;
    gap: 6px;
    padding: 7px 0 0 16px;
    font-size: 9px;
}

.measure-value {
    flex: 1;
    display: flex;
    flex-direction: column;
    justify-content: space-between;
    padding: 0 0 13px 8px;
}

.reading {
    color: #444;
    font-size: 14px;
}

.stats {
    width: 82px;
    border-spacing: 0;
    font-size: 9px;
    line-height: 13px;
}

.stats th {
    width: 24px;
    font-weight: 400;
    text-align: left;
}

.delete {
    display: flex;
    align-items: center;
    justify-content: center;
    width: 26px;
    background: var(--step);
}

.panel-side {
    display: flex;
    flex-direction: column;
    gap: 17px;
    padding-top: 4px;
}

.sizes {
    display: flex;
    width: 109px;
    height: 32px;
    border: 1px solid #a5c9ed;
    border-radius: 5px;
    overflow: hidden;
    background: #fff;
    font-family: Roboto, sans-serif;
}

.sizes button {
    flex: 1;
    font-weight: 700;
}

.sizes .s {
    font-size: 14px;
    font-weight: 500;
}

.sizes .m {
    background: #0a5697;
    color: #fff;
    font-size: 18px;
}

.sizes .l {
    font-size: 24px;
    line-height: 24px;
}

.reset {
    display: flex;
    align-items: center;
    width: 103px;
    height: 25px;
    margin-left: 3px;
    padding-left: 5px;
    border: 1px solid #a5c9ed;
    border-radius: 5px;
    background: #fff;
    font-size: 13px;
}

.reset span {
    flex: 1;
    padding-left: 4px;
}

/* Taskbar */
.taskbar {
    display: flex;
    height: 42px;
    background: #d3dbeb;
    color: #111;
}

.taskbar button {
    display: flex;
    align-items: center;
    justify-content: center;
}

.start {
    width: 50px;
}

.search {
    display: flex;
    align-items: center;
    gap: 11px;
    width: 299px;
    padding: 0 4px 0 11px;
    border: 1px solid #c4c8d0;
    background: #fff;
}

.search input {
    flex: 1;
    min-width: 0;
    border: none;
    outline: none;
    font: 15px 'Open Sans', sans-serif;
}

.search input::placeholder {
    color: #333;
}

.apps {
    display: grid;
    grid-template-columns: repeat(14, 1fr);
    width: 725px;
    margin-right: auto;
}

.apps .active {
    background: #eef2f9;
    border-bottom: 2px solid #1379ce;
}

.zoom-text {
    font: 700 7px 'Open Sans', sans-serif;
    fill: #fff;
    text-anchor: middle;
}

.skype-text {
    font: 700 16px 'Open Sans', sans-serif;
    fill: #fff;
    text-anchor: middle;
}

.fra-text {
    font: 700 9px 'Open Sans', sans-serif;
    fill: #4d4fb5;
    text-anchor: middle;
}

.tray {
    display: flex;
    margin-right: 4px;
    border-right: 1px solid #a6aebc;
}

.tray button {
    width: 33px;
}

.tray .line path {
    fill: none;
    stroke: #222;
}

.tray .wmt {
    width: 80px;
    gap: 10px;
    margin-right: 7px;
    font-size: 14px;
}

.tray .clock {
    flex-direction: column;
    width: 74px;
    font-size: 11px;
    line-height: 19px;
}

.tray .notices {
    width: 50px;
}

.notice-count {
    font: 13px 'Open Sans', sans-serif;
    text-anchor: middle;
}
```
